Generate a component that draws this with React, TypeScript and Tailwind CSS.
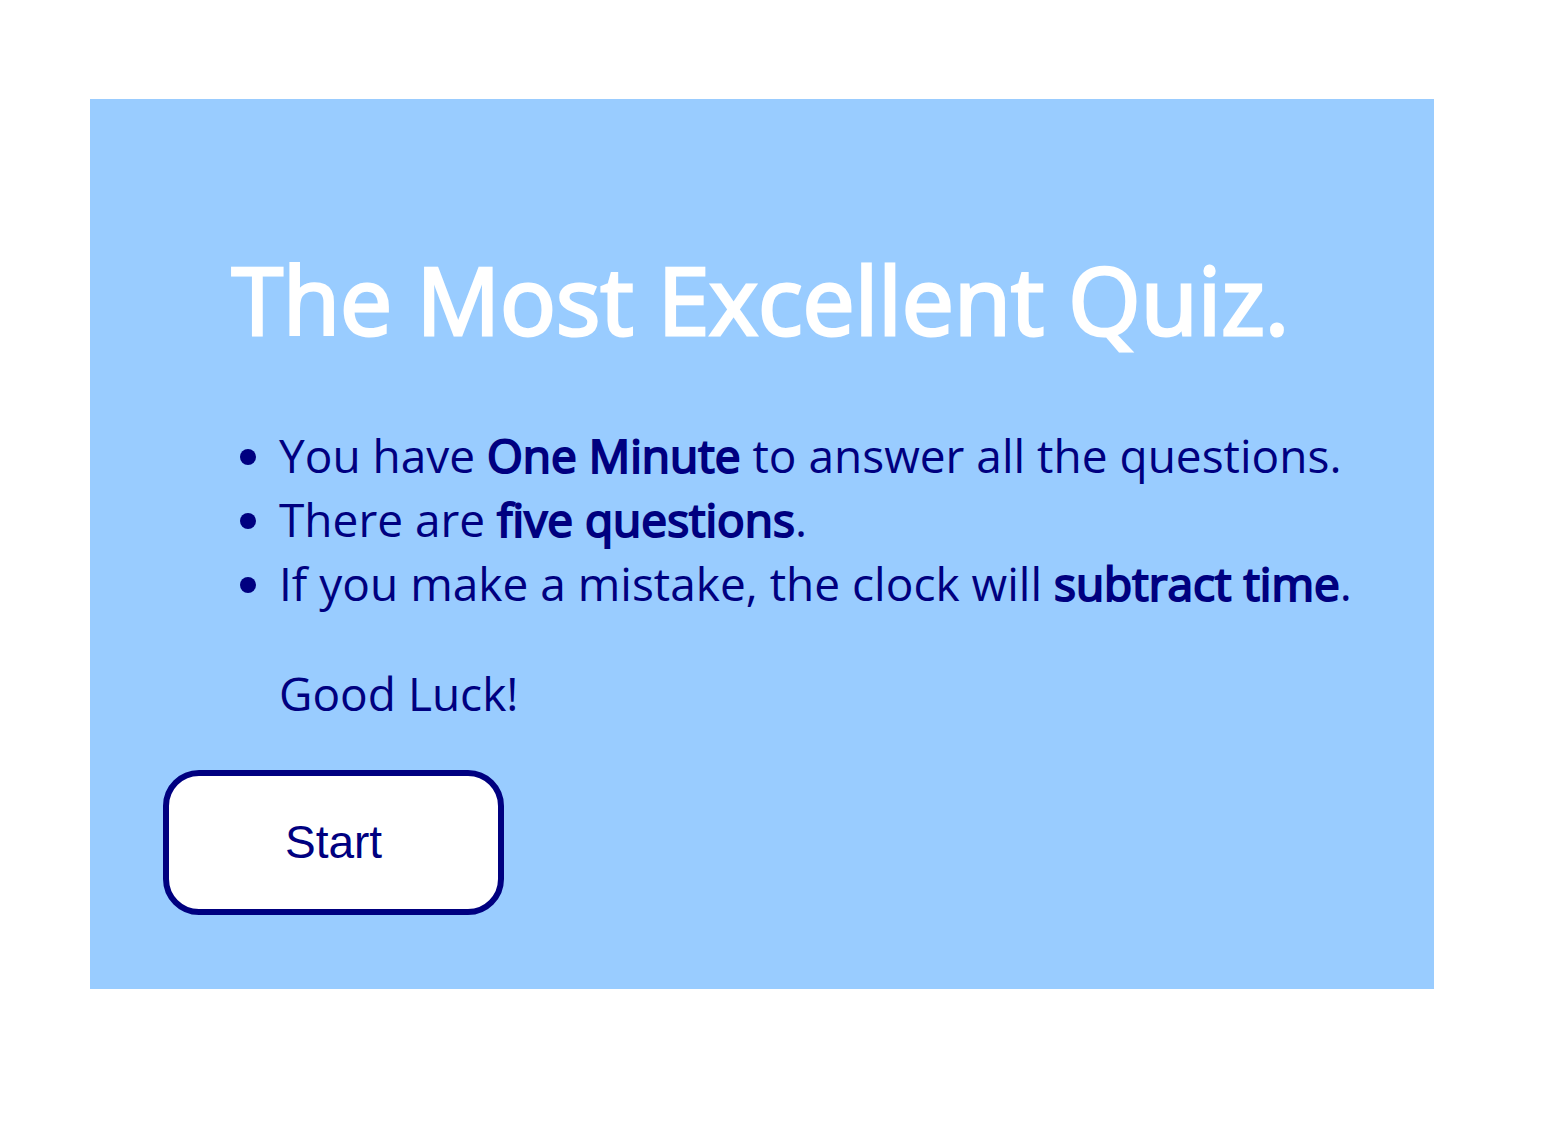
export default function App() {
  return (
    <div className="min-h-screen bg-white pt-[99px] pr-[7%] pb-36 pl-[90px] font-['Open_Sans',sans-serif]">
      <main className="bg-[#99ccff] pt-36 pr-10 pb-[74px] pl-[73px] font-normal text-[#000080]">
        <h1 className="mr-9 text-center text-[93px] leading-[112px] font-normal text-white [-webkit-text-stroke:3px_currentColor]">The Most Excellent Quiz.</h1>
        <ul className="mt-17 list-disc pl-[116px] text-[46px] leading-[64px]">
          <li>You have <b className="font-normal [-webkit-text-stroke:2px_currentColor]">One Minute</b> to answer all the questions.</li>
          <li>There are <b className="font-normal [-webkit-text-stroke:2px_currentColor]">five questions</b>.</li>
          <li>If you make a mistake, the clock will <b className="font-normal [-webkit-text-stroke:2px_currentColor]">subtract time</b>.</li>
        </ul>
        <p className="mt-[46px] pl-[116px] text-[46px] leading-[64px]">Good Luck!</p>
        <button type="button" className="mt-[45px] block rounded-[36px] border-[6px] border-[#000080] bg-white px-29 py-10 font-['Liberation_Sans',sans-serif] text-[46px] leading-[53px] font-normal">Start</button>
      </main>
    </div>
  );
}
